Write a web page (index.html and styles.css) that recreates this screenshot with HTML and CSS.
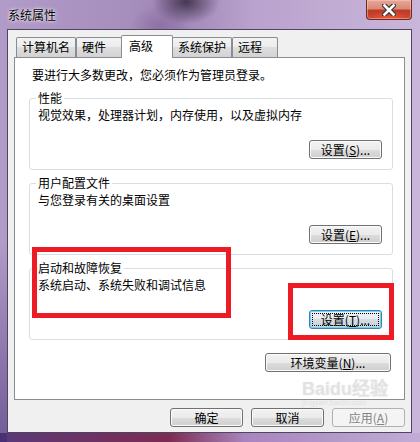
FILE: index.html
```html
<!DOCTYPE html>
<html lang="zh-CN">
<head>
<meta charset="utf-8">
<title>系统属性</title>
<link rel="stylesheet" href="styles.css">
</head>
<body>
<div class="window">
  <div class="titlebar">
    <span class="title">系统属性</span>
    <div class="close">
      <svg width="14" height="12" viewBox="0 0 14 12">
        <path d="M2.5 1.5 L11.5 10.5 M11.5 1.5 L2.5 10.5" stroke="#3b3b3b" stroke-width="5" stroke-linecap="square"/>
        <path d="M2.5 1.5 L11.5 10.5 M11.5 1.5 L2.5 10.5" stroke="#ffffff" stroke-width="2.6" stroke-linecap="square"/>
      </svg>
    </div>
  </div>
  <div class="client">
    <div class="tabs">
      <div class="tab">计算机名</div>
      <div class="tab">硬件</div>
      <div class="tab tab-active">高级</div>
      <div class="tab">系统保护</div>
      <div class="tab">远程</div>
    </div>
    <div class="panel">
      <p class="intro">要进行大多数更改，您必须作为管理员登录。</p>
      <div class="group">
        <span class="legend">性能</span>
        <p class="desc">视觉效果，处理器计划，内存使用，以及虚拟内存</p>
        <button class="btn btn-set">设置(<u>S</u>)...</button>
      </div>
      <div class="group">
        <span class="legend">用户配置文件</span>
        <p class="desc">与您登录有关的桌面设置</p>
        <button class="btn btn-set">设置(<u>E</u>)...</button>
      </div>
      <div class="group">
        <span class="legend">启动和故障恢复</span>
        <p class="desc">系统启动、系统失败和调试信息</p>
        <button class="btn btn-set btn-focus">设置(<u>T</u>)...</button>
      </div>
      <div class="env-row">
        <button class="btn btn-env">环境变量(<u>N</u>)...</button>
      </div>
    </div>
    <div class="actions">
      <button class="btn btn-action">确定</button>
      <button class="btn btn-action">取消</button>
      <button class="btn btn-action btn-disabled">应用(<u>A</u>)</button>
    </div>
  </div>
  <div class="mark mark-text"></div>
  <div class="mark mark-button"></div>
  <div class="watermark">
    <span class="wm-logo">Baidu经验</span>
    <span class="wm-url">jingyan.baidu.com</span>
  </div>
</div>
</body>
</html>
```

FILE: styles.css
```css
* { box-sizing: border-box; }

html, body {
  margin: 0;
  padding: 0;
}

body {
  width: 420px;
  height: 442px;
  overflow: hidden;
  font-family: "Noto Sans CJK SC", "Noto Sans", sans-serif;
  font-size: 12px;
  color: #000;
}

.window {
  position: relative;
  width: 420px;
  height: 442px;
  display: flex;
  flex-direction: column;
  background:
    radial-gradient(ellipse 34px 22px at 186px 2px, rgba(40, 28, 50, 0.75), rgba(40, 28, 50, 0) 100%),
    radial-gradient(ellipse 30px 22px at 160px 26px, rgba(120, 90, 140, 0.5), rgba(120, 90, 140, 0) 100%),
    linear-gradient(180deg, rgba(60, 40, 110, 0) 55%, rgba(60, 40, 110, 0.55) 100%) left top / 7px 100% no-repeat,
    linear-gradient(90deg, #5a3a78 0%, #7c2c52 40%, #a784bd 58%, #c2acd6 100%) left bottom / 100% 9px no-repeat,
    linear-gradient(90deg, #b19bc8 0%, #a68ebd 30%, #9f86b6 42%, #b9a2cd 60%, #c9b6da 100%);
}

.titlebar {
  height: 29px;
  display: flex;
  align-items: flex-start;
  padding-left: 8px;
}

.title {
  padding-top: 7px;
  line-height: 16px;
  color: #000;
  text-shadow: 0 0 4px rgba(255, 255, 255, 0.9), 0 0 2px rgba(255, 255, 255, 0.9);
}

.close {
  margin-left: auto;
  margin-right: 8px;
  width: 46px;
  height: 20px;
  display: flex;
  align-items: center;
  justify-content: center;
  border: 1px solid #6b2a22;
  border-top: none;
  border-radius: 0 0 4px 4px;
  background:
    radial-gradient(ellipse 20px 8px at 50% 100%, rgba(255, 90, 50, 0.8), rgba(255, 90, 50, 0)),
    linear-gradient(180deg, #e7a898 0%, #d98a78 45%, #c03a26 55%, #c84a34 100%);
  box-shadow: inset 0 0 0 1px rgba(255, 210, 200, 0.45);
}

.client {
  margin: 0 8px 0 7px;
  height: 404px;
  border: 1px solid #4c465e;
  background: #f0f0f0;
  padding: 5px 6px 0 6px;
  position: relative;
}

.tabs {
  display: flex;
  align-items: flex-end;
  height: 22px;
  padding-left: 2px;
  position: relative;
  z-index: 2;
}

.tab {
  height: 20px;
  min-width: 46px;
  padding: 0 5px;
  line-height: 18px;
  border: 1px solid #898c95;
  border-bottom: none;
  border-radius: 2px 2px 0 0;
  background: linear-gradient(180deg, #f3f3f3 0%, #ececec 50%, #dedede 50%, #d3d3d3 100%);
  white-space: nowrap;
}

.tab-active {
  height: 23px;
  min-width: 52px;
  margin: 0 -1px -1px -1px;
  padding: 2px 7px 0 7px;
  line-height: 16px;
  background: #fff;
  position: relative;
  z-index: 3;
}

.panel {
  position: relative;
  z-index: 1;
  width: 391px;
  height: 343px;
  border: 1px solid #898c95;
  background: #fff;
  padding-top: 9px;
}

.intro {
  margin: 0;
  padding-left: 17px;
  line-height: 16px;
}

.group {
  position: relative;
  width: 364px;
  height: 72px;
  margin: 13px 0 0 14px;
  border: 1px solid #d5dfe5;
  border-radius: 3px;
  padding: 8px 10px 10px 8px;
  display: flex;
  flex-direction: column;
}

.intro + .group {
  margin-top: 15px;
}

.legend {
  position: absolute;
  top: -9px;
  left: 6px;
  padding: 0 2px;
  line-height: 16px;
  background: #fff;
}

.desc {
  margin: 0;
  line-height: 16px;
}

.btn {
  font-family: inherit;
  font-size: 12px;
  color: #000;
  height: 19px;
  padding: 0;
  line-height: 16px;
  border: 1px solid #707070;
  border-radius: 3px;
  background: linear-gradient(180deg, #f2f2f2 0%, #ebebeb 50%, #dddddd 50%, #cfcfcf 100%);
  box-shadow: inset 0 0 0 1px #fbfbfb;
  display: flex;
  align-items: center;
  justify-content: center;
}

.btn u {
  text-decoration: underline;
  text-underline-offset: 1px;
}

.btn-set {
  margin-top: auto;
  align-self: flex-end;
  width: 73px;
}

.btn-focus {
  position: relative;
  border-color: #3c7fb1;
  box-shadow: inset 0 0 0 1px #6fd3f5;
  background: linear-gradient(180deg, #eef3f6 0%, #e6ecef 50%, #d6dde2 50%, #cad3d9 100%);
}

.btn-focus::after {
  content: "";
  position: absolute;
  inset: 2px;
  border: 1px dotted #000;
}

.env-row {
  display: flex;
  justify-content: flex-end;
  margin-top: 13px;
  padding-right: 13px;
}

.btn-env {
  width: 126px;
}

.actions {
  display: flex;
  justify-content: flex-end;
  gap: 8px;
  margin-top: 8px;
  width: 391px;
}

.btn-action {
  width: 73px;
}

.btn-disabled {
  color: #838383;
  border-color: #adb2b5;
  background: #f4f4f4;
  box-shadow: none;
}

.mark {
  position: absolute;
  border: 5px solid #ed1c24;
  z-index: 5;
}

.mark-text {
  left: 32px;
  top: 247px;
  width: 199px;
  height: 71px;
}

.mark-button {
  left: 288px;
  top: 283px;
  width: 106px;
  height: 57px;
}

.watermark {
  position: absolute;
  left: 302px;
  top: 380px;
  z-index: 6;
  display: flex;
  flex-direction: column;
  pointer-events: none;
}

.wm-logo {
  font-family: "Liberation Sans", sans-serif;
  font-weight: bold;
  font-size: 18px;
  line-height: 18px;
  color: rgba(255, 255, 255, 0.35);
  text-shadow: 0 0 1px rgba(150, 150, 150, 0.45);
}

.wm-url {
  font-family: "Liberation Sans", sans-serif;
  font-size: 8px;
  line-height: 9px;
  color: rgba(200, 200, 200, 0.45);
}
```
